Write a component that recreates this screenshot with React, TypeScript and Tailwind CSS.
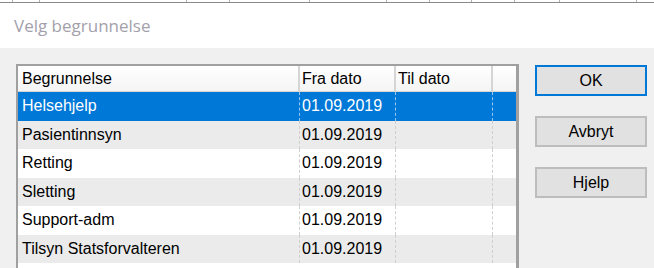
import React from "react";

const rows = [
  { name: "Helsehjelp", fra: "01.09.2019", selected: true },
  { name: "Pasientinnsyn", fra: "01.09.2019" },
  { name: "Retting", fra: "01.09.2019" },
  { name: "Sletting", fra: "01.09.2019" },
  { name: "Support-adm", fra: "01.09.2019" },
  { name: "Tilsyn Statsforvalteren", fra: "01.09.2019" },
];

function Row({ name, fra, selected, index }: { name: string; fra: string; selected?: boolean; index: number }) {
  const bg = selected ? "bg-[#0078d7] text-white" : index % 2 === 1 ? "bg-[#ebebeb] text-black" : "bg-white text-black";
  const dash = selected ? "border-[#9cc8ee]" : "border-[#cfcfcf]";
  return (
    <div className={`flex h-[28.5px] items-center ${bg}`}>
      <div className={`flex h-full w-[282px] items-center border-r border-dashed ${dash} pl-[4px]`}>{name}</div>
      <div className={`flex h-full w-[96px] items-center border-r border-dashed ${dash} pl-[2px]`}>{fra}</div>
      <div className={`flex h-full w-[97px] items-center border-r border-dashed ${dash}`}></div>
      <div className="h-full flex-1"></div>
    </div>
  );
}

function Btn({ label, primary }: { label: string; primary?: boolean }) {
  return (
    <div
      className={`flex h-[31px] w-[112px] items-center justify-center border-2 bg-[#e1e1e1] text-[16px] text-black ${
        primary ? "border-[#0078d7]" : "border-[#bdbdbd]"
      }`}
    >
      {label}
    </div>
  );
}

export default function App() {
  return (
    <div
      className="relative h-[268px] w-[654px] overflow-hidden bg-[#f0f0f0]"
      style={{ fontFamily: '"Liberation Sans", Arial, sans-serif' }}
    >
      <div className="flex h-[3px] border-b border-[#8a8a8a] bg-white">
        <div className="w-[13px] border-r border-[#b0b0b0]"></div>
        <div className="w-[27px] border-r border-[#b0b0b0]"></div>
        <div className="w-[147px] border-r border-[#b0b0b0]"></div>
        <div className="w-[43px] border-r border-[#b0b0b0]"></div>
        <div className="w-[80px] border-r border-[#b0b0b0]"></div>
        <div className="w-[77px] border-r border-[#b0b0b0]"></div>
        <div className="w-[43px] border-r border-[#b0b0b0]"></div>
        <div className="w-[42px] border-r border-[#b0b0b0]"></div>
        <div className="w-[43px] border-r border-[#b0b0b0]"></div>
        <div className="w-[45px] border-r border-[#b0b0b0]"></div>
        <div className="w-[77px] border-r border-[#b0b0b0]"></div>
        <div className="flex-1"></div>
      </div>
      <div
        className="flex h-[45px] items-center bg-white pl-[14px] text-[17px] text-[#a39fab]"
        style={{ fontFamily: '"Open Sans", "Noto Sans", sans-serif' }}
      >
        Velg begrunnelse
      </div>
      <div className="flex pl-[16px] pt-[16px]">
        <div className="h-[260px] w-[503px] border-l-2 border-r-[3px] border-t-2 border-[#a0a0a0] bg-white text-[16px]">
          <div className="flex h-[26px] bg-gradient-to-b from-white to-[#f4f4f4] text-black">
            <div className="flex w-[282px] items-center border-r-2 border-b border-[#d5d5d5] pl-[4px]">Begrunnelse</div>
            <div className="flex w-[96px] items-center border-r-2 border-b border-[#d5d5d5] pl-[2px]">Fra dato</div>
            <div className="flex w-[97px] items-center border-r-2 border-b border-[#d5d5d5] pl-[2px]">Til dato</div>
            <div className="flex-1 border-b border-[#d5d5d5]"></div>
          </div>
          {rows.map((r, i) => (
            <Row key={r.name} index={i} {...r} />
          ))}
        </div>
        <div className="ml-[16px] mt-[1px] flex flex-col gap-[20px]">
          <Btn label="OK" primary />
          <Btn label="Avbryt" />
          <Btn label="Hjelp" />
        </div>
      </div>
    </div>
  );
}
